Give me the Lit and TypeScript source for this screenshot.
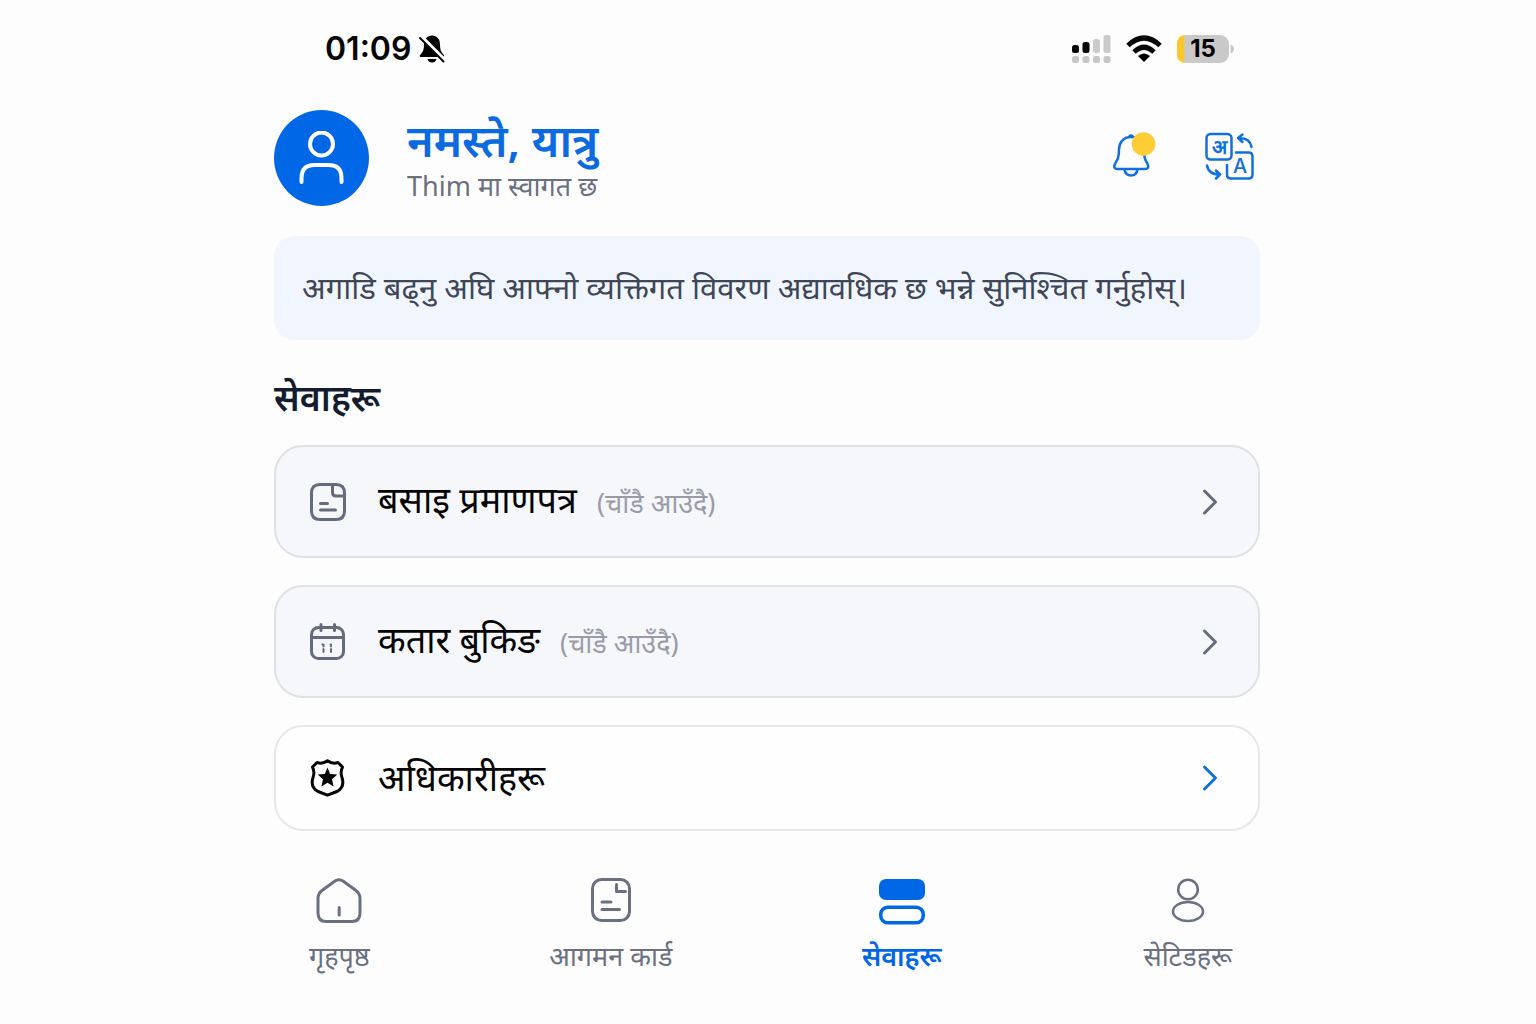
import { LitElement, html, css, svg, nothing } from "lit";
import { customElement } from "lit/decorators.js";
import { classMap } from "lit/directives/class-map.js";

const documentIcon = html`<svg class="icon" width="40" height="46" viewBox="0 0 40 46" aria-hidden="true">
  <rect x="1.5" y="1.5" width="37" height="41" rx="9"></rect>
  <path d="M25.5 6.5V13.5H34.5M11 24H20M11 31.5H28.5"></path>
</svg>`;

const foldedIcon = html`<svg class="icon" width="36" height="38" viewBox="0 0 36 38" aria-hidden="true">
  <path d="M22.5 1.5H10Q1.5 1.5 1.5 10V28Q1.5 36.5 10 36.5H26Q34.5 36.5 34.5 28V10Q34.5 1.5 26 1.5H22.5V9.5Q22.5 13 26 13H34M10.5 20.5H17.5M10.5 27H25.5"></path>
</svg>`;

const calendarIcon = html`<svg class="icon" width="36" height="38" viewBox="0 0 36 38" aria-hidden="true">
  <rect x="1.5" y="4.5" width="32" height="31" rx="7"></rect>
  <path d="M2 14.5H33M11 1.5V7.5M24.5 1.5V7.5"></path>
  <path class="fine" d="M12.5 21.5H13.5V23.5M13.5 26V29M20.5 21.5H21V23.5M21 26V29"></path>
</svg>`;

const badgeIcon = html`<svg class="icon" width="36" height="38" viewBox="0 0 36 38" aria-hidden="true">
  <path d="M7 3.5Q12.5 5.5 17.5 1.8Q22.5 5.5 28 3.5L32.5 8Q30 13 32 18.5Q35 28 27 32.5L17.5 36.2L8 32.5Q0 28 3 18.5Q5 13 2.5 8Z"></path>
  <path class="solid" d="M17.5 8.5L20.2 15L27.3 15.6L22 20.3L23.6 27.4L17.5 23.7L11.4 27.4L13 20.3L7.7 15.6L14.8 15Z"></path>
</svg>`;

const homeIcon = html`<svg class="icon" width="46" height="46" viewBox="0 0 46 46" aria-hidden="true">
  <path d="M19 3Q23 .5 27 3L40 12.5Q44 15.5 44 20.5V35Q44 43.5 36 43.5H10Q2 43.5 2 35V20.5Q2 15.5 6 12.5ZM23.2 29.5V37"></path>
</svg>`;

const stackIcon = html`<svg class="icon" width="48" height="48" viewBox="0 0 48 48" aria-hidden="true">
  <rect class="solid" x="1" y="2" width="46" height="21" rx="7"></rect>
  <rect class="bold" x="2.75" y="30.25" width="42.5" height="15.5" rx="7"></rect>
</svg>`;

const personIcon = html`<svg class="icon light" width="34" height="46" viewBox="0 0 34 46" aria-hidden="true">
  <circle cx="17" cy="11.5" r="9.8"></circle>
  <ellipse cx="17" cy="33.5" rx="15" ry="9.5"></ellipse>
</svg>`;

const chevronIcon = html`<svg class="icon chevron" width="16" height="28" viewBox="0 0 16 28" aria-hidden="true">
  <path d="M2.5 3L13.5 14L2.5 25"></path>
</svg>`;

interface Service {
  label: string;
  icon: unknown;
  note?: string;
}

interface Tab {
  label: string;
  icon: unknown;
  current?: boolean;
}

const services: Service[] = [
  { label: "बसाइ प्रमाणपत्र", icon: foldedIcon, note: "(चाँडै आउँदै)" },
  { label: "कतार बुकिङ", icon: calendarIcon, note: "(चाँडै आउँदै)" },
  { label: "अधिकारीहरू", icon: badgeIcon },
];

const tabs: Tab[] = [
  { label: "गृहपृष्ठ", icon: homeIcon },
  { label: "आगमन कार्ड", icon: documentIcon },
  { label: "सेवाहरू", icon: stackIcon, current: true },
  { label: "सेटिडहरू", icon: personIcon },
];

const iconStyles = css`
  .icon {
    display: block;
    flex: none;
    fill: none;
    stroke: currentColor;
    stroke-width: 3;
    stroke-linecap: round;
    stroke-linejoin: round;
  }
  .icon.light {
    stroke-width: 2.5;
  }
  .icon .solid {
    fill: currentColor;
    stroke: none;
  }
  .icon .fine {
    stroke-width: 2;
  }
  .icon .bold {
    stroke-width: 3.5;
  }
`;

@customElement("status-bar")
export class StatusBar extends LitElement {
  static styles = css`
    :host {
      display: flex;
      align-items: center;
      justify-content: space-between;
      height: 30px;
      padding: 0 26px 0 51px;
      color: #060606;
      font-family: Inter, "Liberation Sans", sans-serif;
    }
    .group {
      display: flex;
      align-items: center;
    }
    .left {
      gap: 7px;
    }
    .right {
      gap: 15px;
    }
    .time {
      font-size: 32px;
      line-height: 32px;
      font-weight: 600;
    }
    svg {
      display: block;
    }
    .battery-text {
      font-size: 24px;
      font-weight: 700;
    }
  `;

  render() {
    const tops = [10, 7, 4, 0];
    return html`
      <div class="group left">
        <span class="time">01:09</span>
        <svg width="28" height="28" viewBox="0 0 28 28" role="img" aria-label="Silent">
          <path d="M14 .5C18.5 .5 22 4 22 9C22 15 23 17 26 20Q26.5 22 24.5 22H3.5Q1 22 2 20C5 17 6 15 6 9C6 4 9.5 .5 14 .5ZM9.5 24H18.5Q17.5 27.5 14 27.5Q10.5 27.5 9.5 24Z"></path>
          <path d="M3.5 2L27 25.5" stroke="#fdfdfd" stroke-width="4"></path>
          <path d="M2 3L25.5 26.5" stroke="#060606" stroke-width="2" stroke-linecap="round"></path>
        </svg>
      </div>
      <div class="group right">
        <svg width="39" height="29" viewBox="0 0 39 29" role="img" aria-label="Signal">
          ${tops.map(
            (top, i) => svg`
              <rect x=${i * 10.5} y=${top} width="7" height=${18 - top} rx="2.5" fill=${i < 2 ? "#060606" : "#cacaca"}></rect>
              <rect x=${i * 10.5} y="21" width="7" height="7" rx="2.5" fill="#c6c6c6"></rect>`
          )}
        </svg>
        <svg width="36" height="28" viewBox="0 0 36 28" role="img" aria-label="Wi-Fi">
          <g fill="none" stroke="#060606" stroke-width="5">
            <path d="M2 10.5Q18 -4.5 34 10.5"></path>
            <path d="M8 17Q18 7.5 28 17"></path>
          </g>
          <path d="M12 21Q18 16 24 21L18 27Z"></path>
        </svg>
        <svg width="57" height="28" viewBox="0 0 57 28" role="img" aria-label="Battery 15%">
          <rect width="52" height="28" rx="9" fill="#c9c9c9"></rect>
          <path d="M7.5 0V28Q0 27 0 19V9Q0 1 7.5 0Z" fill="#fcc72c"></path>
          <path d="M53.5 9.5Q57 11 57 14Q57 17 53.5 18.5Z" fill="#c9c9c9"></path>
          <text class="battery-text" x="26" y="22" text-anchor="middle">15</text>
        </svg>
      </div>
    `;
  }
}

@customElement("greeting-header")
export class GreetingHeader extends LitElement {
  static styles = css`
    :host {
      display: flex;
      align-items: center;
      gap: 38px;
      height: 96px;
    }
    .avatar {
      display: grid;
      place-items: center;
      flex: none;
      width: 95px;
      height: 96px;
      border-radius: 50%;
      background: #0068e6;
    }
    .copy {
      flex: 1;
      min-width: 0;
    }
    h1,
    p {
      margin: 0;
    }
    h1 {
      color: #0a6ae0;
      font-size: 45px;
      line-height: 56px;
      font-weight: 600;
    }
    p {
      color: #6b7080;
      font-size: 27px;
      line-height: 36px;
    }
    .actions {
      display: flex;
      gap: 48px;
      padding: 0 6px 4px 0;
    }
    button {
      padding: 0;
      border: 0;
      background: none;
      cursor: pointer;
    }
    svg {
      display: block;
    }
    .line {
      fill: none;
      stroke: #1270dc;
      stroke-width: 2.5;
      stroke-linecap: round;
      stroke-linejoin: round;
    }
    .person {
      fill: none;
      stroke: #fff;
      stroke-width: 4;
      stroke-linecap: round;
    }
    .glyph {
      fill: #1270dc;
      text-anchor: middle;
      font-size: 20px;
      font-weight: 500;
    }
    .nepali {
      font-weight: 600;
    }
    .latin {
      font-family: Inter, sans-serif;
    }
  `;

  render() {
    return html`
      <div class="avatar">
        <svg class="person" width="46" height="54" viewBox="0 0 46 54" aria-hidden="true">
          <circle cx="22.5" cy="13" r="11.5"></circle>
          <path d="M2.5 51V47Q2.5 34 15.5 34H29.5Q42.5 34 42.5 47V51"></path>
        </svg>
      </div>
      <div class="copy">
        <h1>नमस्ते, यात्रु</h1>
        <p>Thim मा स्वागत छ</p>
      </div>
      <div class="actions">
        <button aria-label="सूचना">
          <svg width="44" height="50" viewBox="0 0 44 50" aria-hidden="true">
            <g class="line">
              <path d="M19 6C11 6 7 12 7 18.5C7 26.5 5.5 28.5 3 33C1.2 36 2.5 38 5.5 38H33C36 38 37.3 36 35.5 33C33 28.5 32 26.5 32 18.5C32 12 27 6 19 6ZM12.5 38.5Q13.5 44.5 19 44.5Q24.5 44.5 25.5 38.5M17.5 5.3Q19 4 20.5 5.3"></path>
            </g>
            <circle cx="31.5" cy="13" r="11.8" fill="#fecd35"></circle>
          </svg>
        </button>
        <button aria-label="भाषा">
          <svg width="50" height="50" viewBox="0 0 50 50" aria-hidden="true">
            <g class="line">
              <rect x="2.5" y="3" width="25" height="25.5" rx="4"></rect>
              <path d="M32 21.5H44.5Q48.5 21.5 48.5 25.5V43.5Q48.5 47.5 44.5 47.5H27Q23 47.5 23 43.5V34"></path>
              <path d="M47.5 16Q46 6.5 34 7M38.5 3.5L34 7L38.5 11"></path>
              <path d="M3 34.5Q4.5 43.5 16 43.5M12 39.5L16 43.5L12 47.5"></path>
            </g>
            <text class="glyph nepali" x="15" y="23">अ</text>
            <text class="glyph latin" x="36" y="42">A</text>
          </svg>
        </button>
      </div>
    `;
  }
}

@customElement("service-list")
export class ServiceList extends LitElement {
  static styles = [
    iconStyles,
    css`
      :host {
        display: block;
      }
      .list {
        display: grid;
        gap: 27px;
        margin: 0;
        padding: 0;
        list-style: none;
      }
      .card {
        display: flex;
        align-items: center;
        gap: 32px;
        width: 100%;
        box-sizing: border-box;
        padding: 27px 40px 27px 34px;
        border: 2px solid #e6e7eb;
        border-radius: 29px;
        background: #fefefe;
        color: #050505;
        font: inherit;
        text-align: left;
        cursor: pointer;
      }
      .soon {
        padding-block: 30px;
        border-color: #e0e1e7;
        background: #f6f7fb;
      }
      .text {
        display: flex;
        flex: 1;
        align-items: baseline;
        gap: 20px;
        line-height: 48px;
      }
      .label {
        font-size: 36px;
      }
      .note {
        color: #999ca8;
        font-size: 27px;
      }
      .chevron {
        color: #1270dc;
      }
      .soon {
        padding-block: 29px;
      }
      .soon > .icon {
        color: #666b7b;
      }
    `,
  ];

  render() {
    return html`<ul class="list">
      ${services.map(
        (s) => html`<li>
          <button class=${classMap({ card: true, soon: !!s.note })}>
            ${s.icon}
            <span class="text">
              <span class="label">${s.label}</span>
              ${s.note ? html`<span class="note">${s.note}</span>` : nothing}
            </span>
            ${chevronIcon}
          </button>
        </li>`
      )}
    </ul>`;
  }
}

@customElement("tab-bar")
export class TabBar extends LitElement {
  static styles = [
    iconStyles,
    css`
      :host {
        display: block;
      }
      nav {
        display: grid;
        grid-template-columns: 239fr 311fr 280fr auto;
        padding: 0 28px 0 35px;
      }
      .tab {
        display: grid;
        grid-template-rows: 48px 36px;
        place-items: center;
        justify-self: start;
        gap: 13px;
        color: #6b7080;
        font-size: 27px;
        line-height: 36px;
        text-decoration: none;
      }
      .current {
        color: #0068e6;
        font-weight: 600;
      }
    `,
  ];

  render() {
    return html`<nav>
      ${tabs.map(
        (t) => html`<a
          class=${classMap({ tab: true, current: !!t.current })}
          href="#"
          aria-current=${t.current ? "page" : nothing}
          >${t.icon}<span>${t.label}</span></a
        >`
      )}
    </nav>`;
  }
}

@customElement("app-root")
export class AppRoot extends LitElement {
  static styles = css`
    :host {
      display: block;
      box-sizing: border-box;
      min-height: 100vh;
      padding: 34px 25px 48px 23px;
      background: #fdfdfe;
      font-family: "Noto Sans", "Noto Sans Devanagari", sans-serif;
    }
    .page {
      max-width: 986px;
      margin: 0 auto;
    }
    greeting-header {
      margin-top: 46px;
    }
    .notice {
      margin: 30px 0 0;
      padding: 27px 28px 29px;
      border-radius: 20px;
      background: #f1f6fe;
      color: #3f4657;
      font-size: 31px;
      line-height: 48px;
    }
    h2 {
      margin: 34px 0 23px;
      color: #141c2f;
      font-size: 36px;
      line-height: 48px;
      font-weight: 600;
    }
    tab-bar {
      margin-top: 46px;
    }
  `;

  render() {
    return html`<div class="page" lang="ne">
      <status-bar></status-bar>
      <greeting-header></greeting-header>
      <p class="notice">अगाडि बढ्नु अघि आफ्नो व्यक्तिगत विवरण अद्यावधिक छ भन्ने सुनिश्चित गर्नुहोस्।</p>
      <h2>सेवाहरू</h2>
      <service-list></service-list>
      <tab-bar></tab-bar>
    </div>`;
  }
}
